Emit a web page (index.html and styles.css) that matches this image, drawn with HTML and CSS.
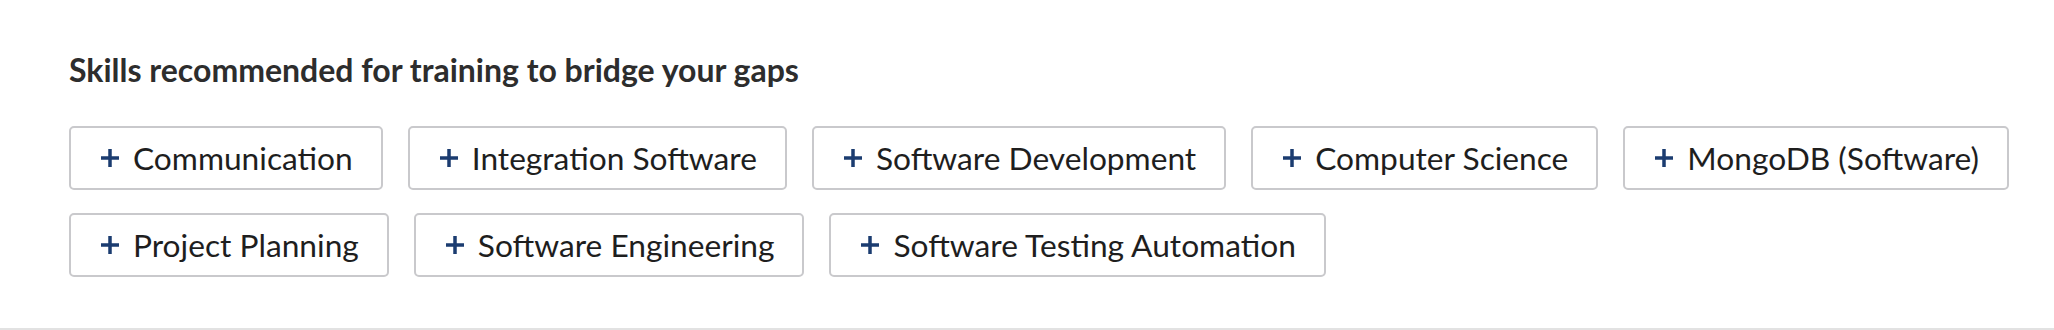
FILE: index.html
```html
<!DOCTYPE html>
<html lang="en">
<head>
    <meta charset="UTF-8">
    <meta name="viewport" content="width=device-width, initial-scale=1.0">
    <title>Skills</title>
    <link rel="stylesheet" href="styles.css">
</head>
<body>
    <div class="panel">
        <h2>Skills recommended for training to bridge your gaps</h2>
        <div class="chips">
            <button class="chip"><svg viewBox="0 0 20 20"><path d="M10 1v18M1 10h18"/></svg>Communication</button>
            <button class="chip"><svg viewBox="0 0 20 20"><path d="M10 1v18M1 10h18"/></svg>Integration Software</button>
            <button class="chip"><svg viewBox="0 0 20 20"><path d="M10 1v18M1 10h18"/></svg>Software Development</button>
            <button class="chip"><svg viewBox="0 0 20 20"><path d="M10 1v18M1 10h18"/></svg>Computer Science</button>
            <button class="chip"><svg viewBox="0 0 20 20"><path d="M10 1v18M1 10h18"/></svg>MongoDB (Software)</button>
            <button class="chip"><svg viewBox="0 0 20 20"><path d="M10 1v18M1 10h18"/></svg>Project Planning</button>
            <button class="chip"><svg viewBox="0 0 20 20"><path d="M10 1v18M1 10h18"/></svg>Software Engineering</button>
            <button class="chip"><svg viewBox="0 0 20 20"><path d="M10 1v18M1 10h18"/></svg>Software Testing Automation</button>
        </div>
    </div>
</body>
</html>
```

FILE: styles.css
```css
body {
    font-family: 'Lato', 'Liberation Sans', sans-serif;
    background-color: #fff;
    margin: 0;
    padding: 0;
    color: #1e1e1e;
}

.panel {
    height: 330px;
    box-sizing: border-box;
    padding: 52px 20px 0 69px;
    border-bottom: 2px solid #e2e2e2;
}

h2 {
    margin: 0 0 38px;
    font-size: 32px;
    line-height: 36px;
    font-weight: bold;
    color: #2d2d2d;
}

.chips {
    display: flex;
    flex-wrap: wrap;
    gap: 23px 25px;
}

.chip {
    display: flex;
    align-items: center;
    gap: 13px;
    height: 64px;
    padding: 0 28px 0 29px;
    background-color: #fff;
    border: 2px solid #c9c9cc;
    border-radius: 5px;
    font-family: inherit;
    font-size: 31.7px;
    color: #1e1e1e;
    cursor: pointer;
}

.chip svg {
    width: 20px;
    height: 20px;
    fill: none;
    stroke: #1b3c70;
    stroke-width: 3.5;
}
```
